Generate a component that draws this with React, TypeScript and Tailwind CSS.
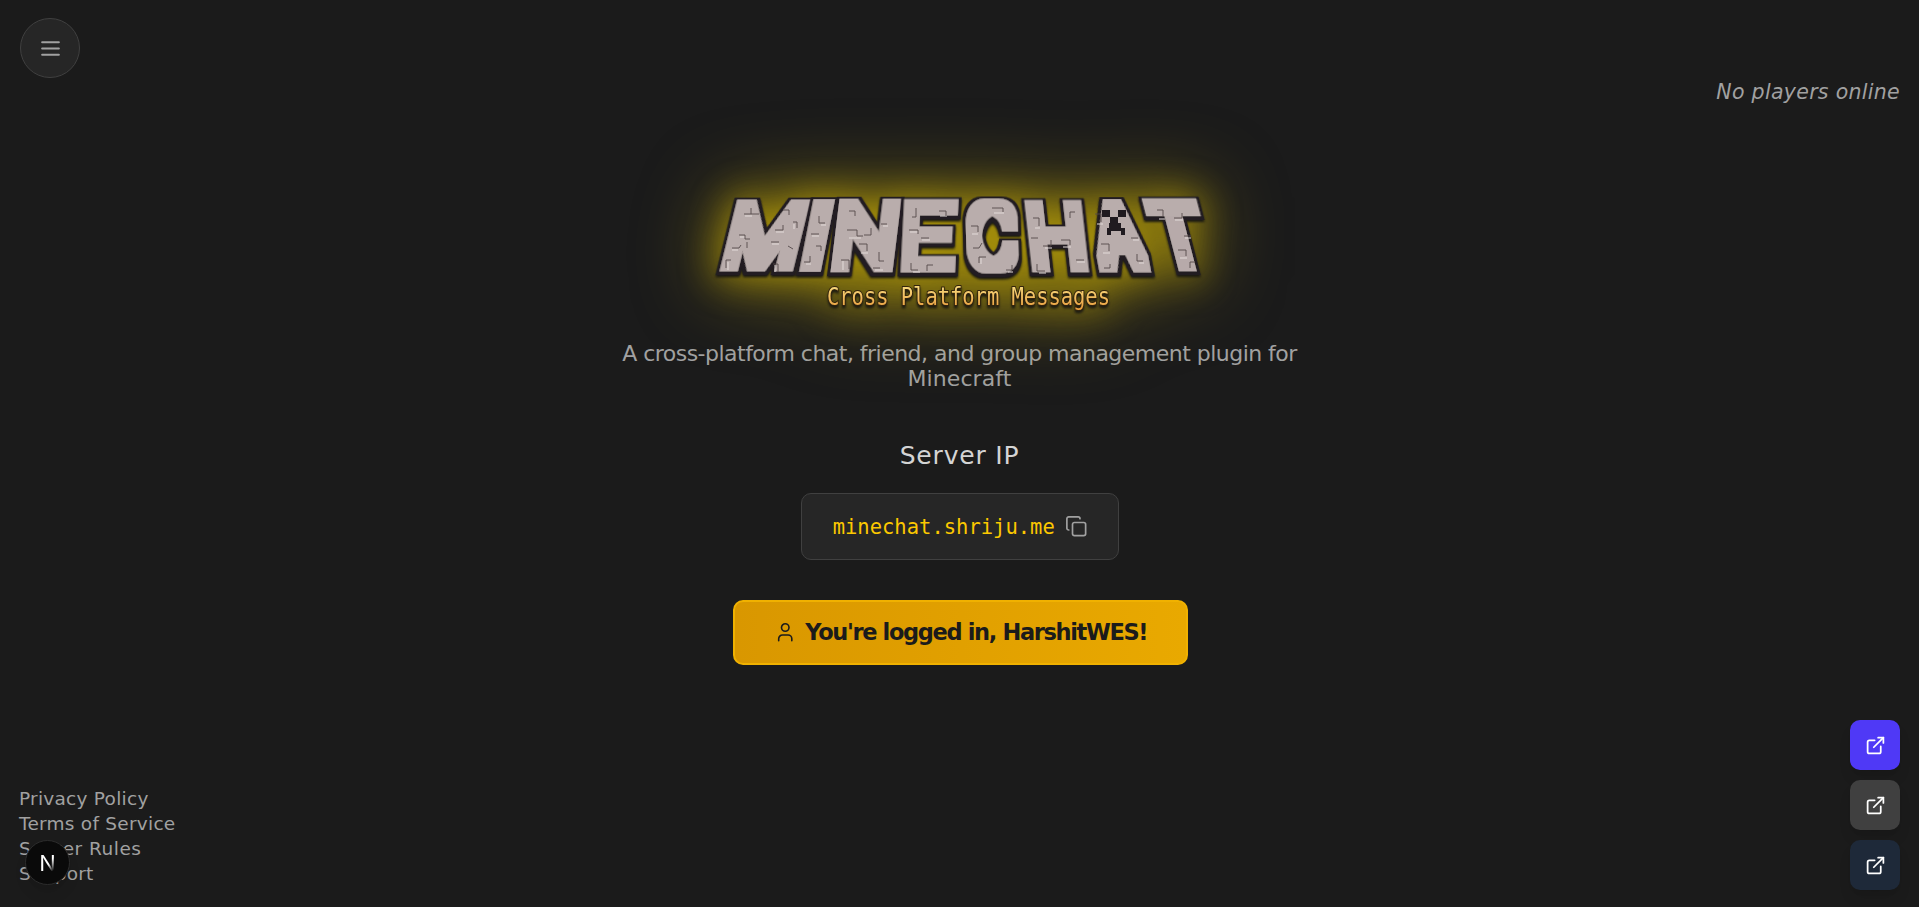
import { Copy, ExternalLink, User } from "lucide-react";

type Letter = { char: string; x: number; skew: number; stretch: number; slim?: boolean };

const letters: Letter[] = [
  { char: "M", x: 66, skew: -13.9, stretch: 1.08 },
  { char: "I", x: 118, skew: -11.2, stretch: 2.6 },
  { char: "N", x: 167, skew: -7, stretch: 1.12 },
  { char: "E", x: 228, skew: -2.8, stretch: 1.12, slim: true },
  { char: "C", x: 293, skew: 1.6, stretch: 0.9, slim: true },
  { char: "H", x: 357.5, skew: 6.3, stretch: 1 },
  { char: "A", x: 419.5, skew: 10.5, stretch: 0.8 },
  { char: "T", x: 479.5, skew: 14.6, stretch: 0.88 },
];

const darkCracks =
  "M45 34h7v-6M52 34h8M40 55h6v4h5M33 68h7l2-3M27 88v-8h5M48 62v6M76 50h8v-5M72 62h8M94 42h4v6M89 66l5 3M74 84h5v8M84 30h6v5M120 36v7h6M112 54h8M105 82h6v-6M117 66h5v5M150 31h6v5M148 50h10v6h6M160 64h8v7M142 80h8v9M165 55h7v-7M182 44h6M180 72v9h5M174 88h7M217 28v9h-4M210 50h9v4M222 58h8M212 83v7h7M240 31h7v5M228 91v-6h6M272 46h7v6M274 68h6l3-5M280 83v-6h7M293 28h11v4M307 90h6v-5M334 38h6v8M332 58h7M344 66h8v-6M338 84v7h8M362 60h9v5M371 38v-6h5M377 80h8M396 34h6v8M402 64h8v7M432 58h7M438 74v7h6M405 88h6v-4M458 30h6v7M475 38h8v-5M485 56h7M479 70h8v6M491 88v-6h5";

const lightCracks =
  "M46 36h7M41 57h5M33 70h6M29 90v-8M77 52h8M73 64h7M76 92v-7M95 44v5M122 45h5M113 56h7M107 84h5M150 58h12M162 73h7M144 90v-9M184 46h5M176 90h8M211 52h8M223 60h8M214 92h7M241 36h7M273 54h6M282 84v-6M295 33h10M309 92h5M336 48h5M346 68h7M340 93h7M364 67h8M378 82h8M398 44h6M404 73h7M434 60h6M440 83h5M460 39h6M476 40h8M486 58h6M481 78h7";

function StoneFilter({ id, radius }: { id: string; radius: number }) {
  return (
    <filter id={id} x="-60" y="-60" width="120" height="120" filterUnits="userSpaceOnUse">
      <feMorphology in="SourceAlpha" operator="dilate" radius={radius} result="face" />
      <feMorphology in="SourceAlpha" operator="dilate" radius={radius + 3} result="edge" />
      <feOffset in="edge" dy="1" result="edgeDown" />
      <feFlood floodColor="#221d24" />
      <feComposite in2="edgeDown" operator="in" result="dark" />
      <feFlood floodColor="#b9adac" />
      <feComposite in2="face" operator="in" result="light" />
      <feMerge>
        <feMergeNode in="dark" />
        <feMergeNode in="light" />
      </feMerge>
    </filter>
  );
}

function Logo() {
  return (
    <svg
      viewBox="0 0 520 130"
      role="img"
      aria-label="Minechat"
      className="-mt-[5px] h-[130px] w-[520px] overflow-visible [filter:drop-shadow(0_0_18px_rgba(240,205,0,0.5))_drop-shadow(0_0_38px_rgba(240,205,0,0.5))]"
    >
      <defs>
        <StoneFilter id="stone" radius={8} />
        <StoneFilter id="stone-slim" radius={7} />
        <linearGradient id="gold" x1="0" y1="0" x2="0" y2="1">
          <stop offset="0.2" stopColor="#f8d67a" />
          <stop offset="0.9" stopColor="#e8a040" />
        </linearGradient>
      </defs>
      <g className="[filter:drop-shadow(0_2px_1px_#1b1a12)]">
        {letters.map((l) => (
          <g key={l.char} transform={`translate(${l.x} 55.5) skewX(${l.skew})`}>
            <g filter={l.slim ? "url(#stone-slim)" : "url(#stone)"}>
              <text
                transform={`scale(${l.stretch} 1)`}
                y={l.slim ? 29.5 : 28.5}
                textAnchor="middle"
                fontSize={l.slim ? 83 : 80}
                fontWeight="100"
                fontFamily="Roboto, sans-serif"
                fill="#b9adac"
              >
                {l.char}
              </text>
            </g>
          </g>
        ))}
      </g>
      <path d={lightCracks} fill="none" stroke="#e4dcda" strokeWidth="1" />
      <path d={darkCracks} fill="none" stroke="#554a4b" strokeWidth="0.9" />
      <path
        d="M403 30h8v7h-8zM419 30h8v7h-8zM411 37h8v6h-8zM410 43h12v5h4v7h-4v-4h-10v4h-4v-7h2z"
        fill="#201b20"
      />
      <text
        transform="translate(128 125) scale(1 1.18)"
        fontSize="20.5"
        textLength="283"
        fontFamily="DejaVu Sans Mono, monospace"
        fill="url(#gold)"
        stroke="#33240c"
        strokeWidth="1.6"
        paintOrder="stroke"
        className="[filter:drop-shadow(0_2px_1px_#1b1a12)]"
      >
        Cross Platform Messages
      </text>
    </svg>
  );
}

const links = [
  { label: "Privacy Policy", spacing: "tracking-[0.25px]" },
  { label: "Terms of Service", spacing: "tracking-[0.25px]" },
  { label: "Server Rules", spacing: "tracking-[0.5px]" },
  { label: "Support", spacing: "tracking-[0.2px]" },
];

const socials = ["bg-[#4f39f6]", "bg-[#404040]", "bg-[#1e2939]"];

export default function App() {
  return (
    <div className="relative flex h-[907px] w-full flex-col items-center overflow-hidden bg-[#1b1b1b] font-['DejaVu_Sans',sans-serif] text-[#a1a1a1]">
      <header className="flex h-[185px] w-full items-start justify-between pt-[18px] pr-[19px] pl-5">
        <button className="flex size-[60px] items-center justify-center rounded-full border border-[#404040] bg-[#262626]">
          <svg viewBox="0 0 24 24" className="size-[25px]" fill="none" stroke="currentColor" strokeWidth="2" strokeLinecap="round">
            <path d="M4 6h16M4 12h16M4 18h16" />
          </svg>
        </button>
        <p className="mt-[62px] text-[20.5px] leading-[25px] tracking-[0.3px] whitespace-nowrap italic">No players online</p>
      </header>

      <main className="flex flex-col items-center">
        <Logo />
        <p className="mt-[31px] text-center text-[22px] leading-[25px] tracking-[-0.52px] whitespace-nowrap">
          A cross-platform chat, friend, and group management plugin for
          <br />
          <span className="tracking-[0.1px]">Minecraft</span>
        </p>
        <h2 className="mt-[50px] text-[25px] leading-[30px] tracking-[0.8px] text-[#d4d4d4]">Server IP</h2>
        <div className="mt-[22px] ml-px flex h-[67px] w-[318px] items-center justify-center gap-2.5 rounded-[10px] border border-[#404040] bg-[#262626]">
          <code className="pt-0.5 font-['DejaVu_Sans_Mono',monospace] text-[20.5px] text-[#fcc800]">minechat.shriju.me</code>
          <Copy className="size-[22.5px]" strokeWidth={1.8} />
        </div>
        <button className="mt-10 ml-0.5 flex h-[65px] w-[455px] items-center justify-center gap-[9px] rounded-[10px] border-2 border-[#f0b100] bg-linear-to-r from-[#d99700] to-[#e9a900] text-[#1b1b1b]">
          <User className="size-[22.5px]" strokeWidth={1.7} />
          <span className="text-[22.5px] font-bold tracking-[-1.35px] whitespace-nowrap">You're logged in, HarshitWES!</span>
        </button>
      </main>

      <footer className="absolute inset-x-0 bottom-0 flex items-end justify-between pr-[19px] pb-[17px] pl-[19px]">
        <nav className="mb-1 flex flex-col text-[18.5px] leading-[25px]">
          {links.map((l) => (
            <a key={l.label} className={l.spacing}>
              {l.label}
            </a>
          ))}
        </nav>
        <div className="flex flex-col gap-2.5">
          {socials.map((bg) => (
            <a key={bg} className={`flex size-[50px] items-center justify-center rounded-[10px] text-white shadow-lg ${bg}`}>
              <ExternalLink className="size-[21px]" strokeWidth={2} />
            </a>
          ))}
        </div>
      </footer>

      <div className="absolute top-[840px] left-[25px] flex size-[45px] items-center justify-center rounded-full border border-[#2c2c2c] bg-[#0a0a0a] shadow-lg">
        <span className="bg-linear-to-br from-white from-55% to-transparent to-85% bg-clip-text font-['Inter',sans-serif] text-[22px] leading-none font-normal text-transparent">
          N
        </span>
      </div>
    </div>
  );
}
